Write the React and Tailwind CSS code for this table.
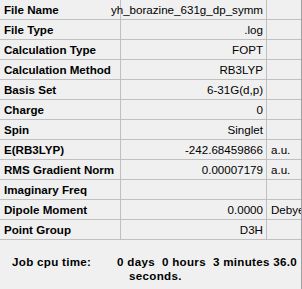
import React from "react";

const rows = [
  { label: "File Name", value: "yh_borazine_631g_dp_symm" },
  { label: "File Type", value: ".log" },
  { label: "Calculation Type", value: "FOPT" },
  { label: "Calculation Method", value: "RB3LYP" },
  { label: "Basis Set", value: "6-31G(d,p)" },
  { label: "Charge", value: "0" },
  { label: "Spin", value: "Singlet" },
  { label: "E(RB3LYP)", value: "-242.68459866", unit: "a.u." },
  { label: "RMS Gradient Norm", value: "0.00007179", unit: "a.u." },
  { label: "Imaginary Freq", value: "" },
  { label: "Dipole Moment", value: "0.0000", unit: "Debye" },
  { label: "Point Group", value: "D3H" },
];

export default function App() {
  return (
    <div
      className="w-[302px] h-[289px] bg-[#f0f0f0] border-r border-[#a0a0a0] text-[11.6px] text-black overflow-hidden"
      style={{ fontFamily: '"Liberation Sans", Arial, sans-serif' }}
    >
      <div className="flex flex-col">
        {rows.map((r) => (
          <div key={r.label} className="flex h-[20px] border-b border-[#c0c0c0]">
            <div className="w-[121px] shrink-0 border-r border-[#c0c0c0] pl-[4px] flex items-center font-bold whitespace-nowrap">
              {r.label}
            </div>
            <div className="w-[146px] shrink-0 border-r border-[#c0c0c0] pr-[3px] flex items-center justify-end whitespace-nowrap">
              {r.value}
            </div>
            <div className="w-[34px] shrink-0 pl-[4px] flex items-center whitespace-nowrap overflow-hidden">
              {r.unit}
            </div>
          </div>
        ))}
      </div>
      <div className="flex pt-[15px] font-bold leading-[14px] tracking-[0.3px]">
        <div className="w-[117px] shrink-0 pl-[12px]">Job cpu time:</div>
        <div className="whitespace-nowrap">
          <div>0 days&nbsp; 0 hours&nbsp; 3 minutes 36.0</div>
          <div className="pl-[12px]">seconds.</div>
        </div>
      </div>
    </div>
  );
}
